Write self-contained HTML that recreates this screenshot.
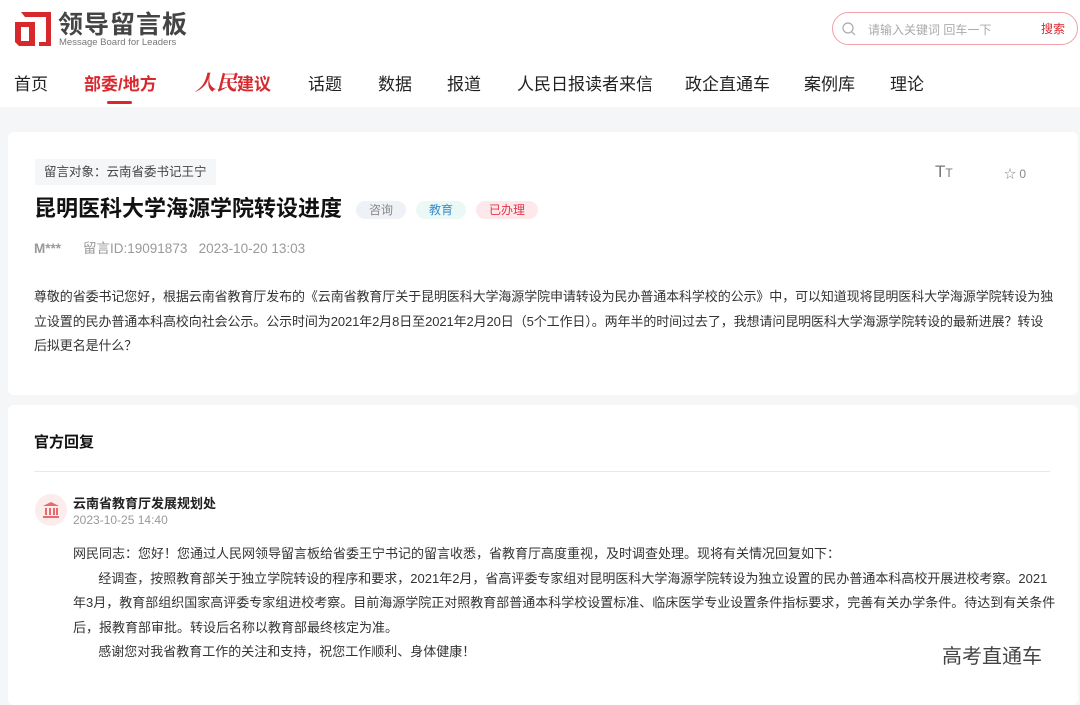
<!DOCTYPE html>
<html><head><meta charset="utf-8"><style>
*{margin:0;padding:0;box-sizing:border-box}
body{width:1080px;height:693px;overflow:hidden;background:#f5f6f8;font-family:"Liberation Sans","Noto Sans CJK SC",sans-serif;color:#333;position:relative}
.hdr{position:absolute;left:0;top:0;width:1080px;height:107px;background:#fff}
.abs{position:absolute;white-space:nowrap}
.card{position:absolute;left:8px;width:1070px;background:#fff;border-radius:6px}
.tag{display:inline-block;height:18px;line-height:18px;padding:0 13px;border-radius:9px;font-size:12px;vertical-align:middle;margin-left:10px;font-weight:normal}
p.t{font-size:13px;line-height:24.5px;color:#333}
.nv{top:73px;font-size:17px;line-height:24px;color:#222}
</style></head><body>
<div class="hdr">
 <svg class="abs" style="left:15px;top:12px" width="36" height="34" viewBox="0 0 36 34"><path d="M6 0H36V34H24V30H31V5H10Z" fill="#d7282e"/><path d="M0 10H20V34H4L0 30ZM6 15V29H14V15Z" fill="#d7282e"/></svg>
 <div class="abs" style="left:58px;top:12px;font-size:25px;line-height:26px;font-weight:bold;color:#444;letter-spacing:1px">领导留言板</div>
 <div class="abs" style="left:59px;top:37px;font-size:9.5px;line-height:11px;color:#777">Message Board for Leaders</div>
 <div class="abs" style="left:832px;top:12px;width:246px;height:33px;border:1px solid #f0a0a6;border-radius:17px"></div>
 <svg class="abs" style="left:842px;top:22px" width="14" height="14" viewBox="0 0 14 14"><circle cx="6" cy="6" r="5" fill="none" stroke="#aaa" stroke-width="1.2"/><path d="M10 10l3 3" stroke="#aaa" stroke-width="1.2"/></svg>
 <div class="abs" style="left:868px;top:21px;font-size:12px;color:#aaa">请输入关键词 回车一下</div>
 <div class="abs" style="left:1041px;top:20px;font-size:12px;color:#d7282e">搜索</div>
 <div class="abs nv" style="left:14px">首页</div>
 <div class="abs nv" style="left:84px;color:#d7282e;font-weight:bold">部委/地方</div>
 <div class="abs" style="left:107px;top:101px;width:25px;height:3px;background:#d7282e;border-radius:2px"></div>
 <div class="abs" style="top:68px;left:195px;font-size:21px;line-height:28px;color:#d7282e;font-weight:bold;font-family:'Noto Serif CJK SC',serif;font-style:italic">人民<span style="font-size:17px;font-style:normal;font-family:'Liberation Sans','Noto Sans CJK SC',sans-serif">建议</span></div>
 <div class="abs nv" style="left:308px">话题</div>
 <div class="abs nv" style="left:378px">数据</div>
 <div class="abs nv" style="left:447px">报道</div>
 <div class="abs nv" style="left:517px">人民日报读者来信</div>
 <div class="abs nv" style="left:685px">政企直通车</div>
 <div class="abs nv" style="left:804px">案例库</div>
 <div class="abs nv" style="left:890px">理论</div>
</div>
<div class="card" style="top:132px;height:263px">
 <div class="abs" style="left:27px;top:27px;height:26px;line-height:26px;padding:0 9px;background:#f5f6f8;font-size:12.5px;color:#444">留言对象：云南省委书记王宁</div>
 <div class="abs" style="left:927px;top:30px;font-size:17px;color:#777">T<span style="font-size:12px">T</span></div>
 <div class="abs" style="left:996px;top:33px;font-size:12px;color:#888">☆ 0</div>
 <div class="abs" style="left:26px;top:62px;font-size:22px;line-height:30px;font-weight:bold;color:#111">昆明医科大学海源学院转设进度<span class="tag" style="margin-left:14px;background:#eef1f6;color:#888">咨询</span><span class="tag" style="background:#ebf9f6;color:#3a8cc8">教育</span><span class="tag" style="background:#fde9ec;color:#e0364a">已办理</span></div>
 <div class="abs" style="left:26px;top:105px;font-size:13.5px;color:#999"><b>M***</b><span style="margin-left:22px">留言ID:19091873&nbsp;&nbsp;&nbsp;2023-10-20 13:03</span></div>
 <p class="t" style="position:absolute;left:26px;top:153px;width:1022px;letter-spacing:-0.1px">尊敬的省委书记您好，根据云南省教育厅发布的《云南省教育厅关于昆明医科大学海源学院申请转设为民办普通本科学校的公示》中，可以知道现将昆明医科大学海源学院转设为独立设置的民办普通本科高校向社会公示。公示时间为2021年2月8日至2021年2月20日（5个工作日）。两年半的时间过去了，我想请问昆明医科大学海源学院转设的最新进展？转设后拟更名是什么？</p>
</div>
<div class="card" style="top:405px;height:300px">
 <div class="abs" style="left:26px;top:26px;font-size:15px;font-weight:bold;color:#111">官方回复</div>
 <div class="abs" style="left:26px;top:66px;width:1016px;height:1px;background:#e8e8e8"></div>
 <div class="abs" style="left:27px;top:89px;width:32px;height:32px;border-radius:50%;background:#fdecec"></div>
 <svg class="abs" style="left:34px;top:96px" width="18" height="18" viewBox="0 0 18 18" fill="#e8696e"><path d="M9 1L1 5H17Z"/><rect x="1" y="15" width="16" height="2"/><rect x="3" y="7" width="2" height="7"/><rect x="7" y="7" width="2" height="7"/><rect x="11" y="7" width="2" height="7"/><rect x="14" y="7" width="2" height="7"/></svg>
 <div class="abs" style="left:65px;top:88px;font-size:13px;font-weight:bold;color:#222">云南省教育厅发展规划处</div>
 <div class="abs" style="left:65px;top:108px;font-size:12px;color:#999">2023-10-25 14:40</div>
 <p class="t" style="position:absolute;left:65px;top:137px;width:986px">网民同志：您好！您通过人民网领导留言板给省委王宁书记的留言收悉，省教育厅高度重视，及时调查处理。现将有关情况回复如下：<br>&nbsp;&nbsp;&nbsp;&nbsp;&nbsp;&nbsp;&nbsp;经调查，按照教育部关于独立学院转设的程序和要求，2021年2月，省高评委专家组对昆明医科大学海源学院转设为独立设置的民办普通本科高校开展进校考察。2021年3月，教育部组织国家高评委专家组进校考察。目前海源学院正对照教育部普通本科学校设置标准、临床医学专业设置条件指标要求，完善有关办学条件。待达到有关条件后，报教育部审批。转设后名称以教育部最终核定为准。<br>&nbsp;&nbsp;&nbsp;&nbsp;&nbsp;&nbsp;&nbsp;感谢您对我省教育工作的关注和支持，祝您工作顺利、身体健康！</p>
</div>
<div class="abs" style="left:942px;top:640px;font-size:20px;color:#444">高考直通车</div>
</body></html>
